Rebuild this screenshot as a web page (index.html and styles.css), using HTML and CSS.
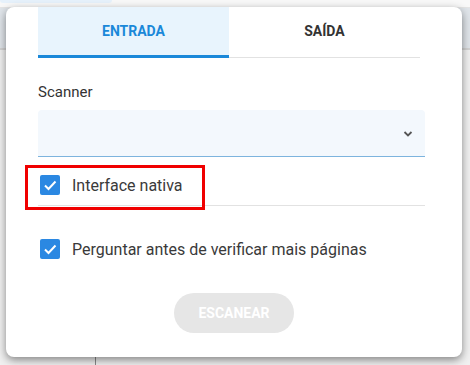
FILE: index.html
```html
<!DOCTYPE html>
<html lang="pt">
<head>
    <meta charset="UTF-8">
    <meta name="viewport" content="width=device-width, initial-scale=1.0">
    <title>Scanner</title>
    <link rel="stylesheet" href="styles.css">
</head>
<body>

    <!-- App behind the dialog -->
    <div class="app">
        <div class="top-strip">
            <div class="top-pill"></div>
        </div>
        <div class="app-header"></div>
        <div class="app-body">
            <div class="app-sidebar"></div>
        </div>
    </div>

    <!-- Scan dialog -->
    <div class="dialog">
        <div class="tabs">
            <div class="tab active">ENTRADA</div>
            <div class="tab">SAÍDA</div>
        </div>

        <div class="field-label">Scanner</div>
        <div class="select">
            <svg class="chevron" width="10" height="6" viewBox="0 0 10 6">
                <polyline points="1.5,1 5,4.5 8.5,1" fill="none" stroke="#555" stroke-width="1.8"/>
            </svg>
        </div>

        <label class="check-row with-divider">
            <span class="checkbox">
                <svg width="20" height="20" viewBox="0 0 20 20">
                    <polyline points="5,10.5 8.5,14 15.5,6.5" fill="none" stroke="#fff" stroke-width="2"/>
                </svg>
            </span>
            Interface nativa
        </label>

        <label class="check-row second">
            <span class="checkbox">
                <svg width="20" height="20" viewBox="0 0 20 20">
                    <polyline points="5,10.5 8.5,14 15.5,6.5" fill="none" stroke="#fff" stroke-width="2"/>
                </svg>
            </span>
            Perguntar antes de verificar mais páginas
        </label>

        <div class="actions">
            <button class="scan-button" disabled>ESCANEAR</button>
        </div>
    </div>

    <!-- Highlight annotation -->
    <div class="highlight"></div>

</body>
</html>
```

FILE: styles.css
```css
/* General Styles */
body {
    font-family: Roboto, 'Noto Sans', sans-serif;
    margin: 0;
    padding: 0;
    width: 470px;
    height: 365px;
    overflow: hidden;
    position: relative;
    background-color: #eeeeee;
    color: #333;
}

/* Background app */
.app {
    display: flex;
    flex-direction: column;
    height: 365px;
}

.top-strip {
    height: 7px;
    background-color: #f8f8f8;
    border-bottom: 1px solid #e4e4e4;
}

.top-pill {
    width: 112px;
    height: 3px;
    background-color: #e6f1fb;
    border-radius: 0 0 10px 10px;
}

.app-header {
    height: 40px;
    background-color: #dfe4e9;
    border-bottom: 2px solid #d2d2d2;
}

.app-body {
    flex: 1;
    background-color: #f0f0f0;
}

.app-sidebar {
    width: 95px;
    height: 100%;
    border-right: 1px solid #8a8a8a;
}

/* Dialog */
.dialog {
    position: absolute;
    left: 6px;
    top: 7px;
    width: 456px;
    height: 350px;
    box-sizing: border-box;
    padding: 0 37px 23px 32px;
    background-color: #fff;
    border-radius: 8px;
    box-shadow: 0 3px 8px rgba(0, 0, 0, 0.45);
    display: flex;
    flex-direction: column;
}

.tabs {
    display: flex;
    width: 382px;
    height: 51px;
    box-shadow: inset 0 -1px #e2e2e2;
}

.tab {
    flex: 1;
    display: flex;
    align-items: center;
    justify-content: center;
    padding-bottom: 4px;
    font-size: 14px;
    font-weight: bold;
    color: #333;
}

.tab.active {
    background-color: #e8f4fd;
    color: #1a88d9;
    box-shadow: inset 0 -3px #1a88d9;
}

.field-label {
    margin-top: 24px;
    font-size: 15px;
    line-height: 20px;
    color: #333;
}

.select {
    margin-top: 8px;
    height: 46px;
    background-color: #f3f8fd;
    border-bottom: 1px solid #7db4de;
    border-radius: 4px 4px 0 0;
    display: flex;
    align-items: center;
    justify-content: flex-end;
    padding-right: 12px;
}

.chevron {
    margin-top: 1px;
}

/* Checkbox rows */
.check-row {
    display: flex;
    align-items: center;
    gap: 12px;
    height: 40px;
    padding-left: 2px;
    font-size: 16px;
    color: #3a3a3a;
}

.check-row.with-divider {
    margin-top: 8px;
    border-bottom: 1px solid #e2e2e2;
}

.check-row.second {
    margin-top: 23px;
}

.checkbox {
    width: 20px;
    height: 20px;
    border-radius: 2px;
    background-color: #2b88e2;
    display: flex;
}

/* Action */
.actions {
    margin-top: 24px;
    display: flex;
    justify-content: center;
}

.scan-button {
    width: 120px;
    height: 40px;
    margin-left: 5px;
    border: none;
    border-radius: 20px;
    background-color: #e6e6e6;
    color: #fff;
    font-family: Roboto, sans-serif;
    font-size: 14px;
    font-weight: bold;
}

/* Red annotation box */
.highlight {
    position: absolute;
    left: 25px;
    top: 165px;
    width: 174px;
    height: 39px;
    border: 3px solid #f00000;
}
```
